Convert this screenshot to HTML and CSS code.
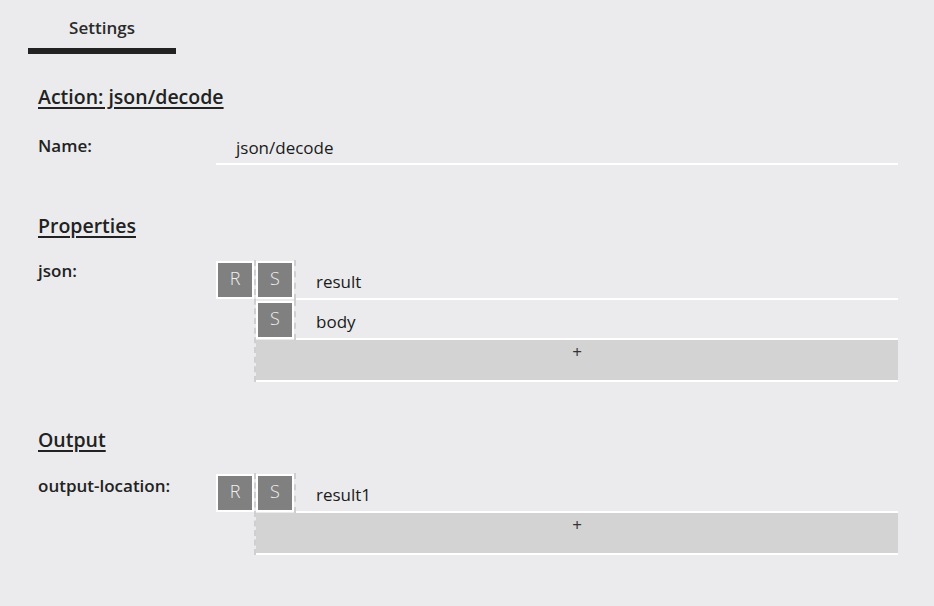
FILE: index.html
```html
<!DOCTYPE html>
<html>
<head>
<meta charset="utf-8">
<link rel="stylesheet" href="styles.css">
</head>
<body>
<div class="tabs">
  <div class="tab active">Settings</div>
</div>
<div class="panel">
  <h2 class="heading first">Action: json/decode</h2>
  <div class="row">
    <div class="label name-label">Name:</div>
    <div class="name-input">json/decode</div>
  </div>

  <h2 class="heading">Properties</h2>
  <div class="row">
    <div class="label">json:</div>
    <div class="btn r">R</div>
    <div class="list">
      <div class="item">
        <div class="s-wrap"><div class="btn">S</div></div>
        <div class="value">result</div>
      </div>
      <div class="item">
        <div class="s-wrap"><div class="btn">S</div></div>
        <div class="value">body</div>
      </div>
      <div class="add">+</div>
    </div>
  </div>

  <h2 class="heading output">Output</h2>
  <div class="row">
    <div class="label out-label">output-location:</div>
    <div class="btn r">R</div>
    <div class="list">
      <div class="item">
        <div class="s-wrap"><div class="btn">S</div></div>
        <div class="value">result1</div>
      </div>
      <div class="add">+</div>
    </div>
  </div>
</div>
</body>
</html>
```

FILE: styles.css
```css
* { box-sizing: border-box; }
html, body {
  margin: 0;
  padding: 0;
  background: #ebebed;
  font-family: "Open Sans", Lato, sans-serif;
  color: #222;
}
.tabs {
  display: flex;
  padding-left: 28px;
}
.tab {
  width: 148px;
  padding: 18px 0 10px;
  line-height: 20px;
  font-size: 17px;
  font-weight: 600;
  text-align: center;
  color: #2a2a2a;
  border-bottom: 6px solid #222;
}
.panel {
  padding: 0 36px 0 38px;
}
.heading {
  margin: 49px 0 22px;
  font-size: 19.5px;
  line-height: 24px;
  font-weight: 600;
  text-decoration: underline;
  text-underline-offset: 3px;
  text-decoration-thickness: 2px;
  color: #222;
}
.heading.first {
  margin-top: 31px;
}
.heading.output {
  margin-top: 46px;
  margin-bottom: 21px;
}
.row {
  display: flex;
  align-items: flex-start;
}
.label {
  width: 178px;
  flex: none;
  font-size: 17px;
  line-height: 22px;
  font-weight: 600;
  color: #222;
}
.name-label {
  padding-top: 4px;
}
.out-label {
  padding-top: 2px;
}
.name-input {
  flex: 1;
  padding: 6px 20px 4px;
  line-height: 22px;
  font-size: 17px;
  border-bottom: 2px solid #fff;
  color: #1a1a1a;
}
.row .btn.r {
  margin-top: 1px;
}
.btn {
  width: 38px;
  height: 38px;
  flex: none;
  background: #808080;
  border: 2px solid #fff;
  color: #f0f0f0;
  font-size: 18px;
  line-height: 30px;
  text-align: center;
  font-weight: 300;
}
.list {
  flex: 1;
  border-left: 2px dashed #cfcfd1;
}
.item {
  display: flex;
  height: 40px;
}
.s-wrap {
  width: 40px;
  flex: none;
  padding-top: 1px;
  border-right: 2px dashed #cfcfd1;
}
.value {
  flex: 1;
  padding: 11px 20px 0;
  line-height: 22px;
  font-size: 17px;
  color: #1a1a1a;
  border-bottom: 2px solid #fff;
}
.add {
  height: 42px;
  background: #d3d3d3;
  border-bottom: 2px solid #fff;
  text-align: center;
  font-size: 17px;
  line-height: 24px;
  color: #333;
}
```
